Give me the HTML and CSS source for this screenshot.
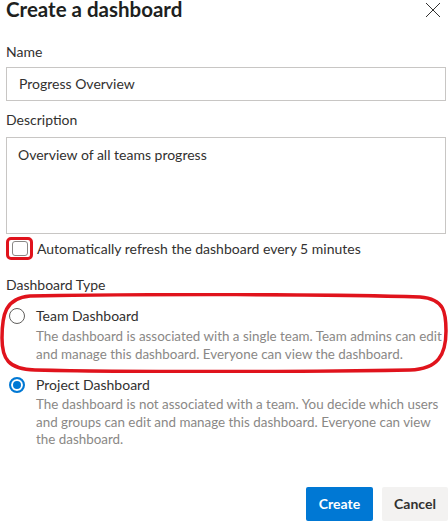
FILE: index.html
```html
<!DOCTYPE html>
<html lang="en">
<head>
<meta charset="utf-8">
<title>Create a dashboard</title>
<link rel="stylesheet" href="styles.css">
</head>
<body>
<div class="dialog">
  <div class="header">
    <h1 class="title">Create a dashboard</h1>
    <button class="close" aria-label="Close">
      <svg width="16" height="16" viewBox="0 0 16 16"><path d="M1 1 L15 15 M15 1 L1 15" stroke="#323130" stroke-width="1" fill="none"/></svg>
    </button>
  </div>
  <div class="body">
    <label class="label label-name">Name</label>
    <div class="input">Progress Overview</div>
    <label class="label label-desc">Description</label>
    <div class="textarea">Overview of all teams progress</div>
    <div class="check-row">
      <span class="highlight"><span class="checkbox"></span></span>
      <span class="check-label">Automatically refresh the dashboard every 5 minutes</span>
    </div>
    <div class="label label-type">Dashboard Type</div>
    <div class="radio-group">
      <div class="option option-team">
        <div class="option-row">
          <span class="radio"></span>
          <span class="option-title">Team Dashboard</span>
        </div>
        <p class="option-desc">The dashboard is associated with a single team. Team admins can edit and manage this dashboard. Everyone can view the dashboard.</p>
        <svg class="annotation" width="448" height="80" viewBox="0 0 448 80"><path d="M30 3 C 150 1, 330 1, 420 4 C 445 6, 446 20, 446 38 C 446 62, 438 76, 410 77 C 300 79, 120 79, 35 77 C 8 76, 2 66, 2 45 C 2 22, 5 5, 30 3 Z" fill="none" stroke="#e0131c" stroke-width="3.5"/></svg>
      </div>
      <div class="option option-project">
        <div class="option-row">
          <span class="radio checked"></span>
          <span class="option-title">Project Dashboard</span>
        </div>
        <p class="option-desc">The dashboard is not associated with a team. You decide which users and groups can edit and manage this dashboard. Everyone can view the dashboard.</p>
      </div>
    </div>
  </div>
  <div class="footer">
    <button class="btn btn-primary">Create</button>
    <button class="btn btn-default">Cancel</button>
  </div>
</div>
</body>
</html>
```

FILE: styles.css
```css
* { box-sizing: border-box; }
html, body {
  margin: 0;
  padding: 0;
  background: #ffffff;
  overflow: hidden;
}
body {
  font-family: Lato, "Open Sans", "Liberation Sans", sans-serif;
  color: #323130;
  font-size: 14px;
  width: 448px;
  height: 521px;
}
.dialog {
  position: relative;
  width: 448px;
}
.header {
  display: flex;
  justify-content: space-between;
  align-items: flex-start;
  height: 20px;
}
.title {
  margin: 0 0 0 6px;
  font-size: 20.5px;
  line-height: 18px;
  font-weight: 700;
  color: #201f1e;
}
.close {
  margin: 2px 7px 0 0;
  padding: 0;
  border: 0;
  background: none;
  width: 16px;
  height: 16px;
  display: block;
}
.close svg { display: block; }
.body {
  padding: 0 2px 0 6px;
}
.label {
  display: block;
  font-size: 14px;
  line-height: 20px;
  color: #323130;
}
.label-name { margin-top: 22px; }
.label-desc { margin-top: 9px; }
.label-type { margin-top: 15px; }
.input {
  margin-top: 5px;
  height: 34px;
  border: 1px solid #c8c6c4;
  padding: 0 12px;
  line-height: 32px;
  font-size: 14px;
  color: #323130;
}
.textarea {
  margin-top: 7px;
  height: 97px;
  border: 1px solid #c8c6c4;
  padding: 8px 11px;
  line-height: 18px;
  font-size: 14px;
}
.check-row {
  margin-top: 3px;
  display: flex;
  align-items: center;
  height: 23px;
}
.highlight {
  display: flex;
  align-items: center;
  justify-content: center;
  width: 27px;
  height: 23px;
  border: 3px solid #e0131c;
  border-radius: 5px;
}
.checkbox {
  width: 16px;
  height: 15px;
  border: 1px solid #8a8886;
  border-radius: 3px;
  background: #fff;
}
.check-label {
  margin-left: 4px;
  font-size: 14px;
  line-height: 20px;
}
.radio-group {
  margin-top: 11px;
}
.option {
  position: relative;
}
.option-project {
  margin-top: 12px;
}
.option-row {
  display: flex;
  align-items: center;
  height: 20px;
}
.radio {
  width: 16px;
  height: 16px;
  border-radius: 50%;
  border: 1px solid #605e5c;
  margin-left: 3px;
  background: #fff;
  flex: none;
}
.radio.checked {
  border: 2px solid #0078d4;
  box-shadow: inset 0 0 0 2px #fff, inset 0 0 0 8px #0078d4;
}
.option-title {
  margin-left: 11px;
  font-size: 14px;
  line-height: 20px;
  color: #323130;
}
.option-desc {
  margin: 2px 0 0 30px;
  font-size: 13.4px;
  line-height: 17.5px;
  color: #8a8886;
}
.option-project .option-desc { margin-top: 1px; }
.annotation {
  position: absolute;
  left: -6px;
  top: -13px;
  pointer-events: none;
}
.footer {
  display: flex;
  justify-content: flex-end;
  gap: 9px;
  margin-top: 38px;
}
.btn {
  height: 34px;
  border: 0;
  border-radius: 2px;
  font-family: inherit;
  font-size: 14px;
  font-weight: 700;
  padding: 0;
}
.btn-primary {
  width: 67px;
  background: #0078d4;
  color: #ffffff;
}
.btn-default {
  width: 66px;
  background: #f3f2f1;
  color: #323130;
}
```
